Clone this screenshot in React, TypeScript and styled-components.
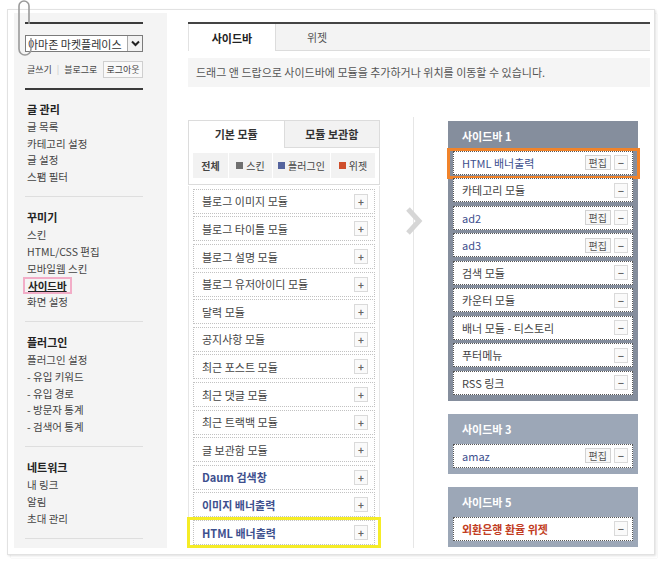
import React from 'react'
import styled, { createGlobalStyle, css } from 'styled-components'

type Kind = 'skin' | 'plugin' | 'widget'

const kindColor: Record<Kind, string> = {
    skin: '#454545',
    plugin: '#3d4f8e',
    widget: '#c23c22',
}

const leftSections = [
    { title: '글 관리', items: ['글 목록', '카테고리 설정', '글 설정', '스팸 필터'] },
    { title: '꾸미기', items: ['스킨', 'HTML/CSS 편집', '모바일웹 스킨', '사이드바', '화면 설정'] },
    { title: '플러그인', items: ['플러그인 설정', '- 유입 키워드', '- 유입 경로', '- 방문자 통계', '- 검색어 통계'] },
    { title: '네트워크', items: ['내 링크', '알림', '초대 관리'] },
]

const modules: { name: string; kind: Kind; mark?: boolean }[] = [
    { name: '블로그 이미지 모듈', kind: 'skin' },
    { name: '블로그 타이틀 모듈', kind: 'skin' },
    { name: '블로그 설명 모듈', kind: 'skin' },
    { name: '블로그 유저아이디 모듈', kind: 'skin' },
    { name: '달력 모듈', kind: 'skin' },
    { name: '공지사항 모듈', kind: 'skin' },
    { name: '최근 포스트 모듈', kind: 'skin' },
    { name: '최근 댓글 모듈', kind: 'skin' },
    { name: '최근 트랙백 모듈', kind: 'skin' },
    { name: '글 보관함 모듈', kind: 'skin' },
    { name: 'Daum 검색창', kind: 'plugin' },
    { name: '이미지 배너출력', kind: 'plugin' },
    { name: 'HTML 배너출력', kind: 'plugin', mark: true },
]

type SideItem = { name: string; kind: Kind; edit?: boolean; mark?: boolean }

const groups: { title: string; active?: boolean; items: SideItem[] }[] = [
    {
        title: '사이드바 1',
        active: true,
        items: [
            { name: 'HTML 배너출력', kind: 'plugin', edit: true, mark: true },
            { name: '카테고리 모듈', kind: 'skin' },
            { name: 'ad2', kind: 'plugin', edit: true },
            { name: 'ad3', kind: 'plugin', edit: true },
            { name: '검색 모듈', kind: 'skin' },
            { name: '카운터 모듈', kind: 'skin' },
            { name: '배너 모듈 - 티스토리', kind: 'skin' },
            { name: '푸터메뉴', kind: 'skin' },
            { name: 'RSS 링크', kind: 'skin' },
        ],
    },
    { title: '사이드바 3', items: [{ name: 'amaz', kind: 'plugin', edit: true }] },
    { title: '사이드바 5', items: [{ name: '외환은행 환율 위젯', kind: 'widget' }] },
]

const filters: { label: string; color?: string; width: number }[] = [
    { label: '전체', width: 35 },
    { label: '스킨', color: '#6f6f6f', width: 43 },
    { label: '플러그인', color: '#55649e', width: 57 },
    { label: '위젯', color: '#cf4e2b', width: 44 },
]

const App = () => {
    return (
        <Page>
            <GlobalStyle />
            <Paper>
                <Screen>
                    <LeftPanel>
                        <DarkLine />
                        <BlogSelect>
                            <span>아마존 마켓플레이스</span>
                            <SelectArrow>
                                <svg width="9" height="7" viewBox="0 0 9 7">
                                    <path d="M1 1.5 L4.5 5 L8 1.5" fill="none" stroke="#222" strokeWidth="2" />
                                </svg>
                            </SelectArrow>
                        </BlogSelect>
                        <LinkRow>
                            <span>글쓰기</span>
                            <Pipe>|</Pipe>
                            <span>블로그로</span>
                            <SmallButton>로그아웃</SmallButton>
                        </LinkRow>
                        <DarkLine $gap={10} />
                        {leftSections.map(section => (
                            <MenuSection key={section.title}>
                                <MenuTitle>{section.title}</MenuTitle>
                                {section.items.map(item => (
                                    <MenuItem key={item}>
                                        {item === '사이드바' ? <CurrentMenu>{item}</CurrentMenu> : item}
                                    </MenuItem>
                                ))}
                            </MenuSection>
                        ))}
                    </LeftPanel>

                    <Main>
                        <TabBar>
                            <Tab $active>사이드바</Tab>
                            <Tab>위젯</Tab>
                        </TabBar>
                        <Notice>드래그 앤 드랍으로 사이드바에 모듈을 추가하거나 위치를 이동할 수 있습니다.</Notice>

                        <Workspace>
                            <ModuleColumn>
                                <ModuleTabs>
                                    <ModuleTab $active>기본 모듈</ModuleTab>
                                    <ModuleTab>모듈 보관함</ModuleTab>
                                </ModuleTabs>
                                <FilterBox>
                                    {filters.map(f => (
                                        <FilterCell key={f.label} $bold={!f.color} style={{ width: f.width }}>
                                            {f.color && <Swatch $color={f.color} />}
                                            {f.label}
                                        </FilterCell>
                                    ))}
                                </FilterBox>
                                <ModuleList>
                                    {modules.map(m => (
                                        <ModuleItem key={m.name} $kind={m.kind} $mark={m.mark}>
                                            <span>{m.name}</span>
                                            <IconButton>+</IconButton>
                                        </ModuleItem>
                                    ))}
                                </ModuleList>
                            </ModuleColumn>

                            <SidebarArea>
                                <Chevron width="18" height="28" viewBox="0 0 18 28">
                                    <path d="M3 2 L14 14 L3 26" fill="none" stroke="#d6d6d6" strokeWidth="5" />
                                </Chevron>
                                {groups.map(g => (
                                    <Group key={g.title} $active={g.active}>
                                        <GroupTitle>{g.title}</GroupTitle>
                                        {g.items.map(item => (
                                            <SideModule key={item.name} $kind={item.kind} $mark={item.mark}>
                                                <span>{item.name}</span>
                                                <Actions>
                                                    {item.edit && <EditButton>편집</EditButton>}
                                                    <IconButton>−</IconButton>
                                                </Actions>
                                            </SideModule>
                                        ))}
                                    </Group>
                                ))}
                            </SidebarArea>
                        </Workspace>
                    </Main>
                </Screen>
            </Paper>
            <ClipSvg width="18" height="58" viewBox="0 0 18 58">
                <path
                    d="M13 24 V6 A5 5 0 0 0 3 6 V49 A6 6 0 0 0 15 49 V38"
                    fill="none"
                    stroke="#9a9a9a"
                    strokeWidth="1.6"
                />
            </ClipSvg>
        </Page>
    )
}

export default App

const GlobalStyle = createGlobalStyle`
    html, body {
        margin: 0;
        padding: 0;
        background: #fff;
        overflow: hidden;
    }
    body {
        font-family: "Noto Sans CJK KR", "Noto Sans", sans-serif;
        color: #333;
    }
    * {
        box-sizing: border-box;
    }
`

const Page = styled.div`
    position: relative;
    width: 663px;
    height: 565px;
    padding: 9px 8px 10px 7px;
`

const Paper = styled.div`
    height: 546px;
    background: #fff;
    border: 1px solid #e2e2e2;
    padding: 3px 4px 6px 6px;
    box-shadow: 1px 1px 2px rgba(0, 0, 0, 0.12), 3px 4px 0 -1px #fff, 3px 4px 1px -1px #d8d8d8;
`

const Screen = styled.div`
    display: flex;
    height: 535px;
    overflow: hidden;
`

const LeftPanel = styled.div`
    flex: 0 0 153px;
    min-width: 0;
    overflow: hidden;
    background: #f4f4f4;
    padding: 9px 24px 0 11px;
    font-size: 10.5px;
    color: #444;
`

const DarkLine = styled.div<{ $gap?: number }>`
    height: 2px;
    background: #3b3b3b;
    margin-top: ${p => p.$gap ?? 0}px;
`

const BlogSelect = styled.div`
    margin-top: 11px;
    height: 17px;
    display: flex;
    align-items: center;
    justify-content: space-between;
    border: 1px solid #7b7b7b;
    background: #fff;
    padding-left: 2px;
    font-size: 11px;
    color: #333;
    white-space: nowrap;
    overflow: hidden;
`

const SelectArrow = styled.span`
    flex: 0 0 15px;
    height: 15px;
    display: flex;
    align-items: center;
    justify-content: center;
    border-left: 1px solid #aaa;
    background: #f2f2f2;
`

const LinkRow = styled.div`
    margin-top: 9px;
    display: flex;
    align-items: center;
    height: 17px;
    padding-left: 2px;
    font-size: 9px;
    color: #444;
    white-space: nowrap;
    & > * {
        flex-shrink: 0;
    }
`

const Pipe = styled.span`
    color: #c8c8c8;
    margin: 0 5px;
`

const SmallButton = styled.span`
    margin-left: auto;
    width: 40px;
    height: 17px;
    line-height: 15px;
    text-align: center;
    border: 1px solid #cfcfcf;
    background: #f9f9f9;
    font-size: 9px;
    color: #444;
`

const MenuSection = styled.div`
    padding: 9px 0 11px 2px;
    border-bottom: 1px solid #dedede;
    & + & {
        padding-top: 10px;
    }
`

const MenuTitle = styled.div`
    line-height: 20px;
    font-weight: 700;
    font-size: 11px;
    color: #222;
`

const MenuItem = styled.div`
    line-height: 16.6px;
    height: 16.6px;
    white-space: nowrap;
`

const CurrentMenu = styled.span`
    display: inline-block;
    margin-left: -4px;
    padding: 0 3px;
    line-height: 13px;
    border: 2px solid #f2adc7;
    font-weight: 700;
    text-decoration: underline;
    color: #222;
`

const Main = styled.div`
    flex: 1;
    min-width: 0;
    display: flex;
    flex-direction: column;
    padding: 9px 0 0 21px;
    background: #fff;
`

const TabBar = styled.div`
    display: flex;
    height: 30px;
    border-top: 2px solid #444;
    border-bottom: 1px solid #dcdcdc;
    background: #f3f3f3;
`

const Tab = styled.div<{ $active?: boolean }>`
    width: 88px;
    display: flex;
    align-items: center;
    justify-content: center;
    font-size: 11px;
    color: ${p => (p.$active ? '#222' : '#555')};
    font-weight: ${p => (p.$active ? 700 : 400)};
    ${p =>
        p.$active
            ? css`
                  background: #fff;
                  border-left: 1px solid #e2e2e2;
                  border-right: 1px solid #dcdcdc;
                  margin-bottom: -1px;
              `
            : css`
                  padding-right: 6px;
              `}
`

const Notice = styled.div`
    margin-top: 7px;
    height: 30px;
    display: flex;
    align-items: center;
    padding-left: 8px;
    background: #f5f5f5;
    font-size: 11px;
    color: #555;
`

const Workspace = styled.div`
    flex: 1;
    display: flex;
    margin-top: 33px;
`

const ModuleColumn = styled.div`
    flex: 0 0 192px;
    display: flex;
    flex-direction: column;
`

const ModuleTabs = styled.div`
    display: flex;
    height: 28px;
`

const ModuleTab = styled.div<{ $active?: boolean }>`
    flex: 1;
    display: flex;
    align-items: center;
    justify-content: center;
    font-size: 11px;
    font-weight: 700;
    color: #333;
    border: 1px solid #dcdcdc;
    border-bottom: ${p => (p.$active ? 'none' : '1px solid #dcdcdc')};
    background: ${p => (p.$active ? '#fff' : '#f2f2f2')};
    & + & {
        border-left: none;
    }
`

const FilterBox = styled.div`
    display: flex;
    gap: 1px;
    padding: 5px 4px 6px;
    border: 1px solid #dcdcdc;
    border-top: none;
`

const FilterCell = styled.div<{ $bold?: boolean }>`
    height: 25px;
    display: flex;
    align-items: center;
    justify-content: center;
    gap: 3px;
    background: #f2f2f2;
    font-size: 10px;
    color: #444;
    font-weight: ${p => (p.$bold ? 700 : 400)};
`

const Swatch = styled.i<{ $color: string }>`
    width: 7px;
    height: 7px;
    background: ${p => p.$color};
`

const ModuleList = styled.ul`
    flex: 1;
    list-style: none;
    margin: 1px 0 0;
    padding: 3px 4px;
    border-left: 1px solid #e6e6e6;
    border-right: 1px solid #e6e6e6;
`

const ModuleItem = styled.li<{ $kind: Kind; $mark?: boolean }>`
    position: relative;
    height: 25px;
    display: flex;
    align-items: center;
    justify-content: space-between;
    padding: 0 6px 0 8px;
    background: #fff;
    border: 1px dotted #c2c2c2;
    font-size: 11px;
    color: ${p => kindColor[p.$kind]};
    font-weight: ${p => (p.$kind === 'skin' ? 400 : 700)};
    & + & {
        margin-top: 2.6px;
    }
    ${p =>
        p.$mark &&
        css`
            &::after {
                content: '';
                position: absolute;
                top: -4px;
                bottom: -4px;
                left: -7px;
                right: -7px;
                border: 3px solid #f5ec26;
            }
        `}
`

const IconButton = styled.span`
    width: 14px;
    height: 15px;
    display: flex;
    align-items: center;
    justify-content: center;
    border: 1px solid #dadada;
    background: #fafafa;
    font-size: 10px;
    font-weight: 700;
    color: #666;
`

const SidebarArea = styled.div`
    position: relative;
    margin-left: 33px;
    padding-left: 34px;
    border-left: 1px solid #e6e6e6;
    margin-top: -3px;
    padding-top: 4px;
`

const Chevron = styled.svg`
    position: absolute;
    left: -9px;
    top: 90px;
`

const Group = styled.div<{ $active?: boolean }>`
    width: 190px;
    padding: 0 5px 6px;
    background: ${p => (p.$active ? '#858e9d' : '#9ca7b7')};
    & + & {
        margin-top: 13px;
    }
`

const GroupTitle = styled.div`
    height: 30px;
    display: flex;
    align-items: center;
    padding-left: 9px;
    font-size: 11px;
    font-weight: 700;
    color: #fff;
`

const SideModule = styled.div<{ $kind: Kind; $mark?: boolean }>`
    position: relative;
    height: 24px;
    display: flex;
    align-items: center;
    justify-content: space-between;
    padding: 0 4px 0 8px;
    background: #fff;
    border: 1px dotted #555;
    font-size: 11px;
    color: ${p => kindColor[p.$kind]};
    font-weight: ${p => (p.$kind === 'widget' ? 700 : 400)};
    & + & {
        margin-top: 3.5px;
    }
    ${p =>
        p.$mark &&
        css`
            &::after {
                content: '';
                position: absolute;
                top: -4px;
                bottom: -5px;
                left: -7px;
                right: -8px;
                border: 3px solid #f1832a;
            }
        `}
`

const Actions = styled.div`
    display: flex;
    gap: 3px;
`

const EditButton = styled.span`
    height: 15px;
    line-height: 13px;
    padding: 0 3px;
    border: 1px solid #d2d2d2;
    background: #f8f8f8;
    font-size: 10px;
    font-weight: 400;
    color: #555;
`

const ClipSvg = styled.svg`
    position: absolute;
    left: 16px;
    top: 0;
`
